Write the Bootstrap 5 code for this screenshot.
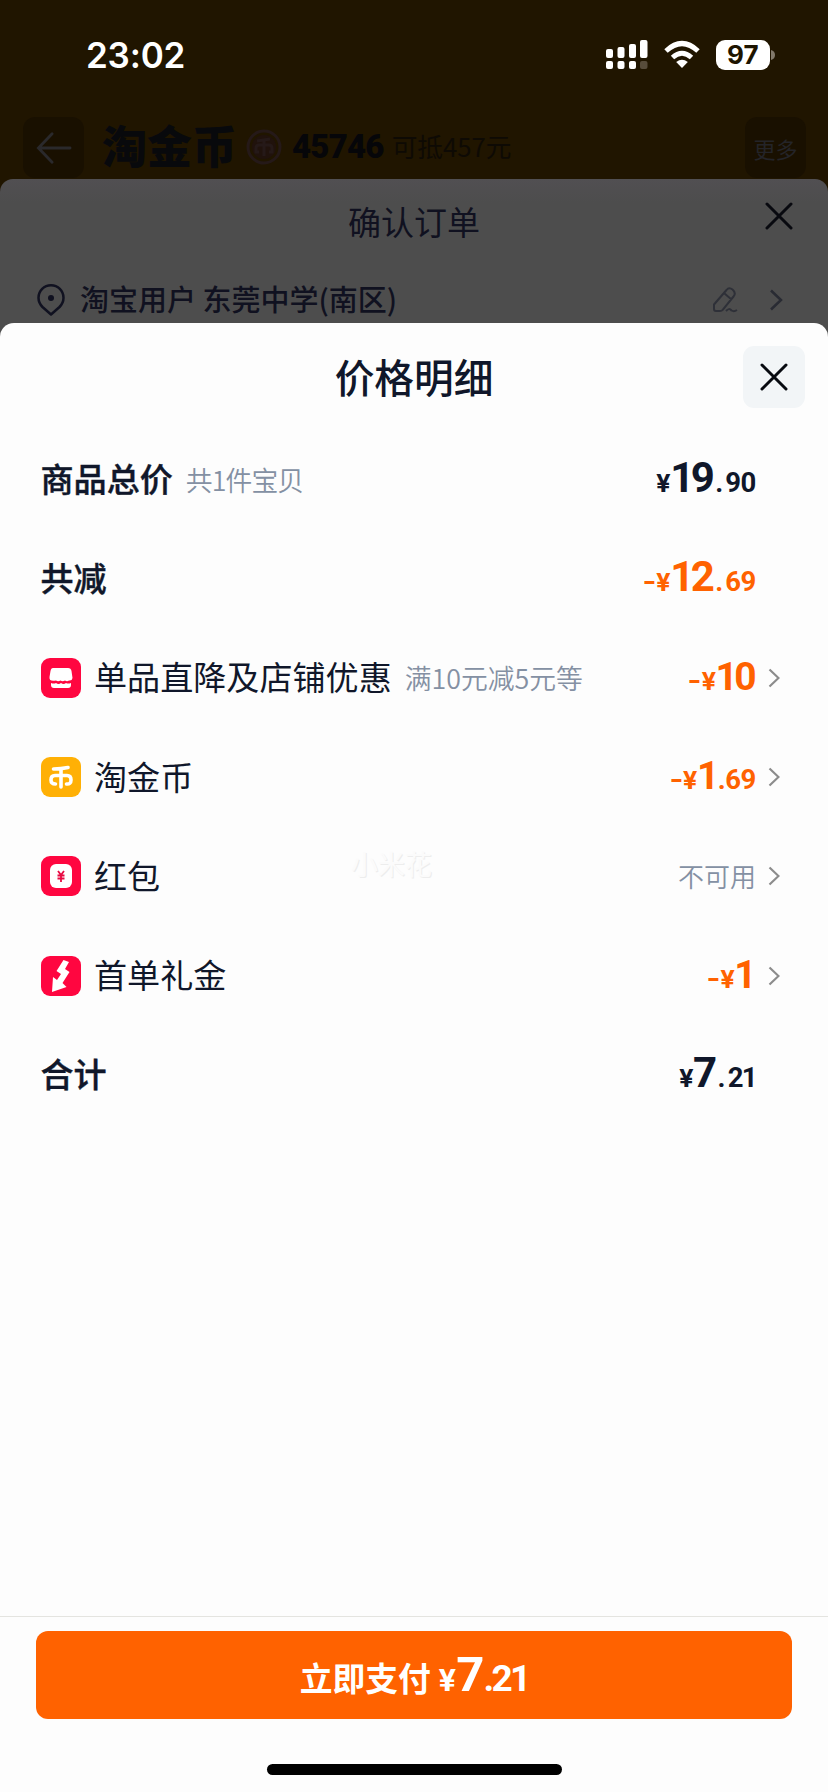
<!DOCTYPE html>
<html lang="zh-CN">
<head>
<meta charset="utf-8">
<meta name="viewport" content="width=device-width, initial-scale=1">
<title>价格明细</title>
<link href="https://cdn.jsdelivr.net/npm/bootstrap@5.3.0/dist/css/bootstrap.min.css" rel="stylesheet">
<style>
:root{--ink:#10172a;--orange:#ff6200;--muted-ink:#8490a3}
body{font-family:"Noto Sans CJK SC",sans-serif;color:var(--ink);background:#201500;height:1792px;overflow:hidden}
svg{display:block;flex:none}
.screen{width:828px;height:1792px}
.status{height:110px;padding:0 52px 0 86px;color:#fff}
.clock{font:600 35px/1 Inter,sans-serif;letter-spacing:-.2px}
.cell-level{width:54px;height:30px;border-radius:9px;background:#fff;color:#1d1400;font:700 26px/30px Inter,sans-serif;text-align:center;letter-spacing:.2px}
.coin-bar{height:69px;padding:7px 22px 0 23px;align-items:flex-start;line-height:58px}
.dark-btn{width:61px;height:61px;border-radius:12px;background:#191000;color:#242428;font-size:22px}
.coin-title{font-weight:900;font-size:45px;line-height:56px;color:#08090c;margin-left:18px;margin-right:9px}
.coin-mark{margin:12px 10px 0 0}
.coin-num{font:900 33px/60px Roboto,sans-serif;color:#060609;letter-spacing:-.8px}
.coin-note{font-size:25.7px;color:#0e0a04}
.order-sheet{height:144px;background:linear-gradient(#514f52 0,#4d4d4d 24px);border-radius:13px 13px 0 0;color:#101120}
.order-wrap{background:#201500}
.order-head{height:86px;font-size:33px}
.order-close{right:35px;top:23px}
.address{height:56px;padding:0 45px 0 37px;font-size:29px;font-weight:500;margin-top:7px}
.place{margin-left:15px;margin-top:-2px}
.sheet-wrap{background:#4d4d4d}
.price-sheet{background:#fdfdfd;border-radius:14px 14px 0 0;height:1469px}
.sheet-head{height:107px;font-size:39.7px;font-weight:500}
.sheet-head>span:first-child{margin-top:-2px}
.close-btn{width:62px;height:62px;border-radius:11px;background:#f2f5f7;right:23px;top:23px}
.line-item{height:99.2px;padding:0 48px 0 40.5px;font-size:33.1px;line-height:50px;white-space:nowrap}
.line-item.main-line{padding-right:72px;font-weight:500}
.item-name{margin-top:-3px}
.main-line .item-name{-webkit-text-stroke:.4px currentColor}
.tile{width:40px;height:40px;margin:0 13px 0 .5px}
.note{font-size:26.8px;color:var(--muted-ink);font-weight:350;margin-left:13px}
.note.tight{letter-spacing:-.9px}
.note.state{font-size:26px}
.amount{font:700 27.5px/44px Roboto,sans-serif;color:var(--orange);margin-top:2px;letter-spacing:-.4px}
.amount.dark{color:var(--ink)}
.yen{font-size:26.5px}
.amount .big{font-size:39px;letter-spacing:-3.6px;margin-right:3px}
.main-line .amount .big{font-size:42px;letter-spacing:-3.6px;margin-right:5px}
.main-line .amount{margin-top:1px}
.main-line .dot{margin-right:2.5px}
.tight-cents{letter-spacing:-1.6px}
.line-item .big+.dot{margin-left:-1px}
.amount .dash{display:inline-block;transform:scaleX(1.3);margin-right:2px}
.arrow{margin-left:12px}
.watermark{left:351px;top:844px;font-size:27px;line-height:40px;color:#fbfbfb;text-shadow:1px 1px 0 #ededed}
.pay-bar{border-top:1px solid #e4e4e0;height:176px;padding:14px 36px 17px}
.pay-btn{height:88px;border-radius:12px;background:var(--orange);border:0;color:#fff;font-size:32.8px;font-weight:700;padding-top:5px}
.pay-btn .amount{color:#fff;font-size:37px;letter-spacing:-2.8px;margin-top:0}
.pay-btn .yen{font-size:32px;margin-right:3px}
.pay-btn .sum{font-size:49px;margin-right:2px}
.home{width:295px;height:11px;border-radius:6px;background:#000}
</style>
</head>
<body>
<div class="screen d-flex flex-column position-relative">
  <div class="status d-flex align-items-center justify-content-between">
    <span class="clock">23:02</span>
    <div class="d-flex align-items-center">
      <svg width="43" height="32" viewBox="0 0 43 32" fill="#fff"><rect x="1" y="10" width="7" height="9" rx="2"/><rect x="12.500" y="8" width="7" height="11" rx="2"/><rect x="24" y="5" width="7" height="14" rx="2"/><rect x="35" y="1" width="7.500" height="18" rx="2"/><rect x="1" y="22" width="7" height="8" rx="2"/><rect x="12.500" y="22" width="7" height="8" rx="2"/><rect x="24" y="22" width="7" height="8" rx="2"/><rect x="35" y="22" width="7.500" height="8" rx="2" fill="#574c3b"/></svg>
      <svg class="ms-3" width="36" height="30" viewBox="0 0 36 30"><g fill="none" stroke="#fff" stroke-width="5"><path d="M2 11Q18-4 34 11"/><path d="M8.500 17.500Q18 9 27.500 17.500"/></g><path d="M18 28L12.200 22Q18 17.500 23.800 22Z" fill="#fff"/></svg>
      <span class="cell-level ms-3">97</span>
      <svg width="6" height="14" viewBox="0 0 6 14"><path d="M1 2Q5 3 5 7T1 12Z" fill="#81786a"/></svg>
    </div>
  </div>

  <div class="coin-bar d-flex">
    <span class="dark-btn d-flex align-items-center justify-content-center"><svg width="38" height="34" viewBox="0 0 40 36" fill="none" stroke="#2a292b" stroke-width="3" stroke-linecap="round"><path d="M18 3L3.500 18 18 33M4 18H37"/></svg></span>
    <span class="coin-title">淘金币</span>
    <svg class="coin-mark" width="36" height="36" viewBox="0 0 36 36" fill="none" stroke="#251918" stroke-width="3"><circle cx="18" cy="18" r="16"/><circle cx="18" cy="18" r="12" fill="#20120c" stroke="none"/><path d="M11 12L24 10M18 11V27M13 23H10V19Q10 16 13 16H23Q26 16 26 19V23H23"/></svg>
    <span class="coin-num">45746</span><span class="coin-note ms-2">可抵457元</span>
    <span class="dark-btn d-flex align-items-center justify-content-center ms-auto">更多</span>
  </div>

  <div class="order-wrap"><div class="order-sheet">
    <div class="order-head d-flex align-items-center justify-content-center position-relative">确认订单
      <svg class="order-close position-absolute" width="28" height="28" viewBox="0 0 28 28" stroke="#08090f" stroke-width="3" stroke-linecap="round"><path d="M2 2L26 26M26 2L2 26"/></svg>
    </div>
    <div class="address d-flex align-items-center">
      <svg width="28" height="32" viewBox="0 0 28 32" fill="none" stroke="#101120" stroke-width="2.500"><path d="M14 30.500L5.500 23Q1.500 19 1.500 13.800A12.500 12.500 0 0 1 26.500 13.800Q26.500 19 22.500 23Z" stroke-linejoin="round"/><circle cx="14" cy="14" r="3" fill="#101120" stroke="none"/></svg>
      <span class="place">淘宝用户 东莞中学(南区)</span>
      <svg class="ms-auto" width="26" height="26" viewBox="0 0 26 26" fill="none" stroke="#2e3038" stroke-width="2"><path d="M2 17.500L14.500 3Q17-.2 20.500 2.500 24.500 6 21.500 9.500L10.500 23Q9.800 24 8 24H4Q2 24 2 22ZM12.500 6.500L19.500 12.500M14 24Q17 20.500 19.500 23.500 22 25 25 23"/></svg>
      <svg style="margin-left:31px" width="14" height="22" viewBox="0 0 14 22" fill="none" stroke="#292b33" stroke-width="2.500"><path d="M2 1.500L12 11 2 20.500"/></svg>
    </div>
  </div></div>

  <div class="sheet-wrap"><div class="price-sheet d-flex flex-column">
    <div class="sheet-head d-flex align-items-center justify-content-center position-relative"><span>价格明细</span>
      <span class="close-btn position-absolute d-flex align-items-center justify-content-center"><svg width="28" height="28" viewBox="0 0 28 28" stroke="#080a10" stroke-width="3" stroke-linecap="round"><path d="M2 2L26 26M26 2L2 26"/></svg></span>
    </div>
    <div class="line-item main-line d-flex align-items-center"><span class="item-name">商品总价</span><span class="note tight">共1件宝贝</span><span class="amount dark ms-auto"><span class="yen">¥</span><span class="big">19</span><span class="dot">.</span>90</span></div>
    <div class="line-item main-line d-flex align-items-center"><span class="item-name">共减</span><span class="amount ms-auto"><span class="dash">-</span><span class="yen">¥</span><span class="big">12</span><span class="dot">.</span>69</span></div>
    <div class="line-item d-flex align-items-center">
      <svg class="tile" viewBox="0 0 40 40"><rect width="40" height="40" rx="9" fill="#ff0640"/><path d="M12 10H27Q30 10 30.500 13L31.500 20Q31 23 28 22.500 26 24 24 22.500 21.500 24 19.500 22.500 17 24 15 22.500 8 24 8.500 19L9.500 13Q10 10 12 10Z" fill="#fff"/><path d="M10 25Q13 26 15 25 17.500 27 20 25 22.500 27 25 25 27 26 30 25V27Q30 30 27 30H13Q10 30 10 27Z" fill="#fff"/></svg>
      <span class="item-name">单品直降及店铺优惠</span><span class="note">满10元减5元等</span><span class="amount ms-auto"><span class="dash">-</span><span class="yen">¥</span><span class="big">10</span></span>
      <svg class="arrow" width="12" height="20" viewBox="0 0 12 20" fill="none" stroke="#8c8c8c" stroke-width="2.200"><path d="M1.500 1.500L10.500 10 1.500 18.500"/></svg>
    </div>
    <div class="line-item d-flex align-items-center">
      <svg class="tile" viewBox="0 0 40 40"><rect width="40" height="40" rx="9" fill="#ffb005"/><path d="M12.500 12Q20 12 27 10.500M20 12V30M14.500 27Q10 27 10 23 10 18.500 14 18.500H26Q30 18.500 30 23T25.500 27" fill="none" stroke="#fff" stroke-width="3.600" stroke-linecap="round"/></svg>
      <span class="item-name">淘金币</span><span class="amount ms-auto"><span class="dash">-</span><span class="yen">¥</span><span class="big">1</span><span class="dot">.</span>69</span>
      <svg class="arrow" width="12" height="20" viewBox="0 0 12 20" fill="none" stroke="#8c8c8c" stroke-width="2.200"><path d="M1.500 1.500L10.500 10 1.500 18.500"/></svg>
    </div>
    <div class="line-item d-flex align-items-center">
      <svg class="tile" viewBox="0 0 40 40"><rect width="40" height="40" rx="9" fill="#ff0640"/><rect x="9" y="8" width="22" height="24" rx="6" fill="#fff"/><path d="M17 15L20 19 23 15M16.500 19.500H23.500M16.500 22.500H23.500M20 19V26" fill="none" stroke="#e80b43" stroke-width="1.800"/></svg>
      <span class="item-name">红包</span><span class="note state ms-auto">不可用</span>
      <svg class="arrow" width="12" height="20" viewBox="0 0 12 20" fill="none" stroke="#8c8c8c" stroke-width="2.200"><path d="M1.500 1.500L10.500 10 1.500 18.500"/></svg>
    </div>
    <div class="line-item d-flex align-items-center">
      <svg class="tile" viewBox="0 0 40 40"><rect width="40" height="40" rx="9" fill="#ff0640"/><path d="M22.500 4L28 6 24 13 28.500 16 21.500 27 25.500 31 11 36 12 21 16 24 20 18 15.500 15Z" fill="#fff"/></svg>
      <span class="item-name">首单礼金</span><span class="amount ms-auto"><span class="dash">-</span><span class="yen">¥</span><span class="big">1</span></span>
      <svg class="arrow" width="12" height="20" viewBox="0 0 12 20" fill="none" stroke="#8c8c8c" stroke-width="2.200"><path d="M1.500 1.500L10.500 10 1.500 18.500"/></svg>
    </div>
    <div class="line-item main-line d-flex align-items-center"><span class="item-name">合计</span><span class="amount dark ms-auto"><span class="yen">¥</span><span class="big">7</span><span class="dot">.</span><span class="tight-cents">21</span></span></div>

    <div class="pay-bar mt-auto d-flex flex-column align-items-center justify-content-between">
      <button class="pay-btn w-100 d-flex align-items-center justify-content-center"><span>立即支付</span><span class="amount ms-2"><span class="yen">¥</span><span class="sum">7</span>.21</span></button>
      <span class="home"></span>
    </div>
  </div></div>
  <span class="watermark position-absolute">小米花</span>
</div>
<script src="https://cdn.jsdelivr.net/npm/bootstrap@5.3.0/dist/js/bootstrap.bundle.min.js"></script>
</body>
</html>
